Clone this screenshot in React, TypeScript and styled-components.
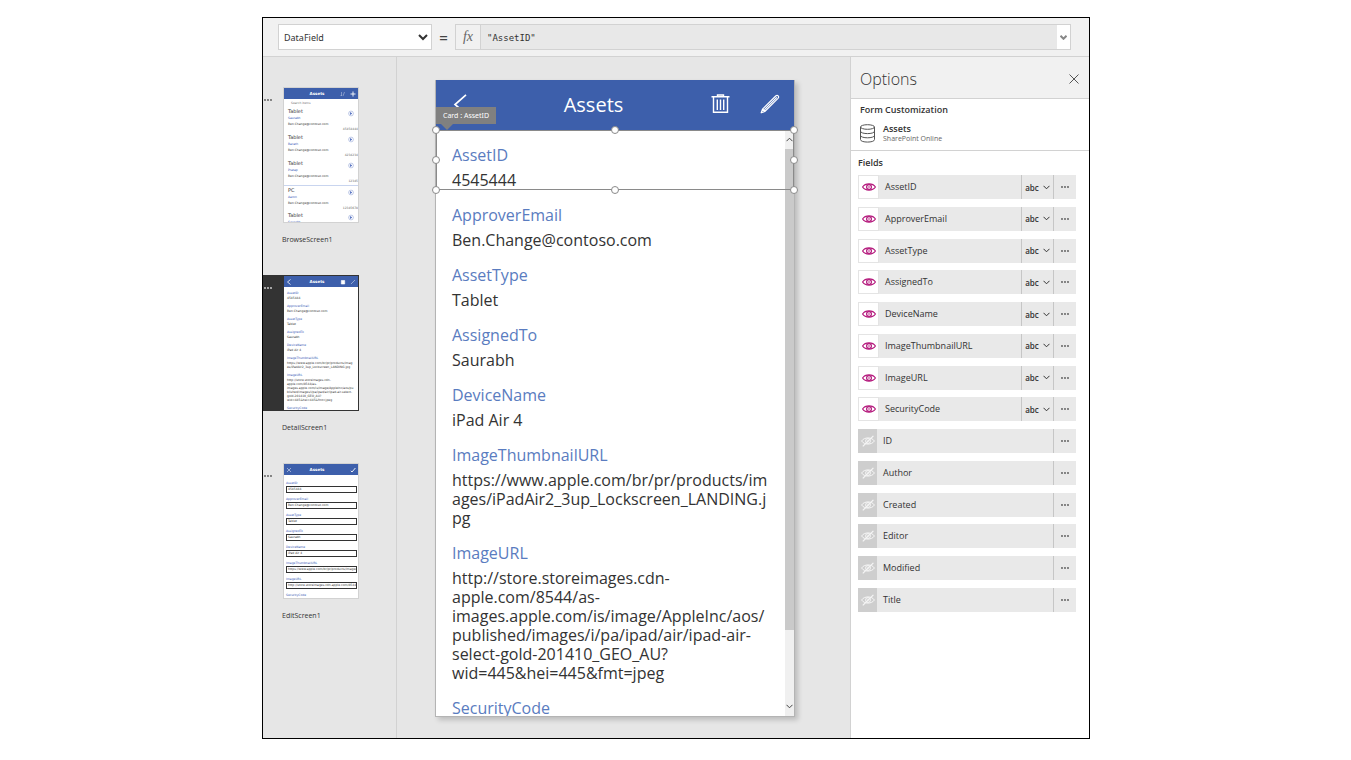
import React from "react";
import styled, { createGlobalStyle, css } from "styled-components";

const blue = "#3d5fab";
const line = "#d2d2d2";

const GlobalStyle = createGlobalStyle`
  * { box-sizing: border-box; }
  body {
    margin: 0;
    padding: 17px 0 21px 1px;
    background: #fff;
    font-family: "Open Sans", "Noto Sans", sans-serif;
    color: #333;
  }
  button, input, select { font: inherit; color: inherit; }
  button { padding: 0; border: 0; background: none; }
  h1, h2, h3, p, ul, dl, dt, dd { margin: 0; padding: 0; font-weight: 400; }
  ul { list-style: none; }
`;

const Frame = styled.div`
  max-width: 828px;
  margin: 0 auto;
  border: 1px solid #000;
  background: #e6e6e6;
`;

/* ---------- formula bar ---------- */

const FormulaBar = styled.header`
  display: flex;
  align-items: center;
  height: 39px;
  padding: 0 18px 0 15px;
  background: #f1f1f1;
  border-bottom: 1px solid ${line};
`;

const PropertySelect = styled.select`
  width: 154px;
  height: 26px;
  padding: 0 0 0 1px;
  border: 1px solid ${line};
  border-radius: 0;
  background: #fff;
  font-family: "Noto Sans", sans-serif;
  font-size: 9px;
`;

const Equals = styled.span`
  width: 23px;
  text-align: center;
  font-size: 15px;
  line-height: 20px;
  font-weight: 600;
  color: #444;
`;

const Formula = styled.div`
  display: flex;
  flex: 1;
  height: 26px;
  border: 1px solid ${line};
  background: #e8e8e8;
`;

const FxLabel = styled.label`
  width: 25px;
  border-right: 1px solid ${line};
  background: #f1f1f1;
  font-family: "Liberation Serif", serif;
  font-style: italic;
  font-size: 14px;
  line-height: 24px;
  text-align: center;
  color: #666;
`;

const FormulaInput = styled.input`
  flex: 1;
  min-width: 0;
  padding: 1px 6px 0;
  border: 0;
  background: transparent;
  font-family: "DejaVu Sans Mono", monospace;
  font-size: 9px;
`;

const ExpandButton = styled.button`
  display: grid;
  place-items: center;
  width: 13px;
  background: #fff;
  color: #888;
`;

/* ---------- screens list ---------- */

const Workspace = styled.div`
  display: flex;
`;

const Screens = styled.nav`
  flex: 0 0 134px;
  padding-top: 30px;
  border-right: 1px solid ${line};
`;

const ScreenItem = styled.div`
  margin-bottom: 27px;
`;

const ScreenButton = styled.button<{ $active?: boolean }>`
  display: grid;
  grid-template-columns: 20px 76px;
  height: 136px;
  text-align: left;
  color: #555;
  ${(p) =>
    p.$active &&
    css`
      background: #333;
      color: #ddd;
    `}
`;

const ScreenMore = styled.span`
  padding: 8px 0 0 1px;
  line-height: 0;
`;

const ScreenName = styled.p`
  padding-left: 19px;
  margin-top: 9px;
  font-size: 7px;
  line-height: 16px;
`;

const Thumb = styled.span<{ $active?: boolean }>`
  display: block;
  height: 136px;
  overflow: hidden;
  border: 1px solid ${(p) => (p.$active ? "#333" : line)};
  background: #fff;
  color: #333;
  font-family: "DejaVu Sans", sans-serif;
  font-size: 3px;
  line-height: 4px;
`;

const ThumbBar = styled.span`
  display: grid;
  grid-template-columns: 10px 1fr 10px 10px;
  align-items: center;
  justify-items: center;
  height: 11px;
  background: ${blue};
  color: #fff;
  font-size: 4px;
  font-weight: 700;
`;

const ThumbTitle = styled.span`
  padding-left: 2px;
`;

const ThumbSearch = styled.span`
  display: block;
  padding: 2px 0 0 7px;
  height: 8px;
  color: #777;
`;

const ThumbRow = styled.span<{ $split?: boolean }>`
  display: grid;
  grid-template-columns: 1fr 10px;
  height: 26px;
  padding: 2px 0 0 4px;
  ${(p) => p.$split && css`border-top: 1px solid #c9d5ef;`}
`;

const ThumbLines = styled.span`
  display: flex;
  flex-direction: column;
  gap: 2px;
`;

const ThumbHeading = styled.span`
  font-size: 5px;
  line-height: 5px;
`;

const ThumbBlue = styled.span`
  color: #3557b5;
`;

const ThumbDate = styled.span`
  grid-column: 1 / -1;
  justify-self: end;
  color: #666;
  line-height: 3px;
`;

const ThumbFields = styled.span<{ $edit?: boolean }>`
  display: block;
  padding: ${(p) => (p.$edit ? "2px 1px 0 2px" : "0 4px 0 3px")};
`;

const ThumbField = styled.span`
  display: flex;
  flex-direction: column;
  gap: 1px;
  padding-top: 4px;
`;

const ThumbBox = styled.span`
  height: 7px;
  padding-left: 1px;
  border: 1px solid #333;
  overflow: hidden;
  line-height: 5px;
  white-space: nowrap;
`;

const ThumbValue = styled.span`
  overflow-wrap: anywhere;
`;

/* ---------- canvas with the phone ---------- */

const Stage = styled.main`
  flex: 1;
  min-width: 0;
  padding: 23px 55px 21px 38px;
`;

const Phone = styled.section`
  border: 1px solid #b4b4b4;
  border-top: 0;
  background: #fff;
  box-shadow: 3px 3px 5px rgba(0, 0, 0, 0.18);
`;

const PhoneBar = styled.div`
  display: flex;
  align-items: center;
  height: 50px;
  padding: 0 14px 2px 13px;
  background: ${blue};
  color: #fff;
`;

const PhoneTitle = styled.h1`
  flex: 1;
  padding: 2px 0 0 7px;
  text-align: center;
  font-size: 20px;
  line-height: 28px;
`;

const PhoneAction = styled.button`
  display: grid;
  place-items: center;
  width: 21px;
  height: 24px;
`;

const PhoneActions = styled.div`
  display: flex;
  gap: 28px;
`;

const PhoneBody = styled.div`
  position: relative;
  display: flex;
  height: 586px;
`;

const Cards = styled.dl`
  flex: 1;
  min-width: 0;
  overflow: hidden;
`;

const Card = styled.div`
  padding: 14px 13px 0 16px;
`;

const CardLabel = styled.dt`
  margin-bottom: 5px;
  font-size: 16px;
  line-height: 22px;
  color: #5a7cc0;
`;

const CardValue = styled.dd`
  font-size: 16px;
  line-height: 19px;
  overflow-wrap: anywhere;
`;

const Scrollbar = styled.div`
  display: flex;
  flex-direction: column;
  align-items: center;
  width: 9px;
  background: #f0f0f0;
`;

const ScrollArrow = styled.button`
  display: grid;
  place-items: center;
  width: 9px;
  height: 19px;
  color: #444;
`;

const ScrollThumb = styled.div`
  width: 9px;
  height: 481px;
  margin-bottom: auto;
  background: #cacaca;
`;

const Selection = styled.div`
  position: absolute;
  inset: 0 0 auto 0;
  height: 60px;
  box-shadow: inset 0 0 0 1px #8a8a8a;
`;

const Handle = styled.i<{ $x: string; $y: string }>`
  position: absolute;
  left: ${(p) => p.$x};
  top: ${(p) => p.$y};
  width: 8px;
  height: 8px;
  margin: -4px;
  border: 1px solid #8a8a8a;
  border-radius: 50%;
  background: #fff;
`;

const CardTag = styled.span`
  position: absolute;
  left: 0;
  bottom: 66px;
  padding: 0 7px;
  background: #808080;
  color: #fff;
  font-family: "Noto Sans", sans-serif;
  font-size: 7px;
  line-height: 17px;
  white-space: nowrap;
  &::after {
    content: "";
    position: absolute;
    left: 5px;
    top: 100%;
    border: 6px solid transparent;
    border-top-color: #808080;
    border-bottom: 0;
  }
`;

/* ---------- options panel ---------- */

const Options = styled.aside`
  flex: 0 0 239px;
  border-left: 1px solid ${line};
  background: #fff;
`;

const OptionsHeader = styled.div`
  display: flex;
  align-items: center;
  justify-content: space-between;
  height: 42px;
  padding: 3px 9px 0 9px;
  border-bottom: 1px solid ${line};
  background: #f1f1f1;
`;

const OptionsTitle = styled.h2`
  font-size: 16px;
  font-weight: 300;
  line-height: 24px;
`;

const CloseButton = styled.button`
  display: grid;
  place-items: center;
  width: 12px;
  height: 12px;
`;

const Source = styled.div`
  height: 52px;
  padding: 4px 9px 0;
  border-bottom: 1px solid ${line};
`;

const SourceTitle = styled.h3`
  font-size: 9px;
  font-weight: 600;
  line-height: 14px;
`;

const SourceInfo = styled.div`
  display: flex;
  gap: 8px;
  margin-top: 7px;
  line-height: 10px;
`;

const SourceName = styled.p`
  font-size: 9px;
  font-weight: 600;
`;

const SourceKind = styled.p`
  font-size: 7px;
  color: #666;
`;

const FieldsTitle = styled.h3`
  padding: 5px 7px 5px;
  font-size: 9px;
  font-weight: 600;
  line-height: 14px;
`;

const FieldList = styled.ul`
  display: flex;
  flex-direction: column;
  justify-content: space-between;
  height: 437px;
  padding: 0 13px 0 7px;
`;

const FieldRow = styled.li`
  display: flex;
  height: 24px;
  background: #e9e9e9;
`;

const EyeButton = styled.button<{ $hidden: boolean }>`
  display: grid;
  place-items: center;
  width: ${(p) => (p.$hidden ? "19px" : "21px")};
  border: ${(p) => (p.$hidden ? "0" : "1px solid #e4e4e4")};
  background: ${(p) => (p.$hidden ? "#cecece" : "#fff")};
`;

const FieldName = styled.span`
  flex: 1;
  padding-left: 6px;
  font-size: 9px;
  line-height: 24px;
`;

const TypeButton = styled.button`
  display: flex;
  align-items: center;
  justify-content: center;
  gap: 4px;
  width: 32px;
  border-left: 1px solid #c6c6c6;
  font-size: 8px;
  font-weight: 600;
`;

const MoreButton = styled.button`
  display: grid;
  place-items: center;
  width: 23px;
  border-left: 1px solid #c6c6c6;
  color: #555;
`;

/* ---------- icons ---------- */

const Chevron = ({ up = false, width = 2 }: { up?: boolean; width?: number }) => (
  <svg width="7" height="5" viewBox="0 0 7 5" fill="none" stroke="currentColor" strokeWidth={width}>
    <path d={up ? "M.5 4.2 3.5 1.2 6.5 4.2" : "M.5.8 3.5 3.8 6.5.8"} />
  </svg>
);

const Dots = () => (
  <svg width="8" height="2" viewBox="0 0 8 2" fill="currentColor">
    <circle cx="1" cy="1" r=".9" />
    <circle cx="4" cy="1" r=".9" />
    <circle cx="7" cy="1" r=".9" />
  </svg>
);

const Eye = ({ off }: { off: boolean }) => {
  const c = off ? "#f6f6f6" : "#b4187c";
  return (
    <svg width="14" height="12" viewBox="0 0 14 12" fill="none" stroke={c} strokeWidth={off ? 1 : 1.2}>
      <path d="M.6 6C3.2 1.9 10.8 1.9 13.4 6 10.8 10.1 3.2 10.1.6 6Z" />
      <circle cx="7" cy="6" r="2.4" />
      <circle cx="7" cy="6" r=".8" fill={c} stroke="none" />
      {off && <path d="M12.4.8 1.8 11.4" strokeWidth="1.2" />}
    </svg>
  );
};

const Database = () => (
  <svg width="15" height="19" viewBox="0 0 15 19" fill="none" stroke="#555" strokeWidth="1">
    <ellipse cx="7.5" cy="3" rx="7" ry="2.3" />
    <path d="M.5 3V15.6C.5 18.9 14.5 18.9 14.5 15.6V3M.5 7.2C.5 10.4 14.5 10.4 14.5 7.2M.5 11.4C.5 14.6 14.5 14.6 14.5 11.4" />
  </svg>
);

const Trash = () => (
  <svg width="19" height="20" viewBox="0 0 19 20" fill="none" stroke="#fff" strokeWidth="1.4">
    <path d="M.5 2.7H18.5M6.5 2.5V1H12.5V2.5M2.5 3V18.3H16.5V3M6.3 5.5V16M9.5 5.5V16M12.7 5.5V16" />
  </svg>
);

const Pencil = () => (
  <svg width="20" height="20" viewBox="0 0 20 20" fill="none" stroke="#fff" strokeWidth="1.2" strokeLinejoin="round">
    <path d="M1.2 18.8 2.5 15.2 15.7 2C17.6.4 19.6 2.5 18 4.3L4.8 17.5ZM2.7 15 5 17.3M4.4 15.7 16.8 3.3" />
  </svg>
);

const Back = () => (
  <svg width="14" height="21" viewBox="0 0 14 21" fill="none" stroke="#fff" strokeWidth="1.7">
    <path d="M13 .8 2 10.5 13 20.2" />
  </svg>
);

/* ---------- data ---------- */

const thumbUrl = "https://www.apple.com/br/pr/products/images/iPadAir2_3up_Lockscreen_LANDING.jpg";
const imageUrl =
  "http://store.storeimages.cdn-apple.com/8544/as-images.apple.com/is/image/AppleInc/aos/published/images/i/pa/ipad/air/ipad-air-select-gold-201410_GEO_AU?wid=445&hei=445&fmt=jpeg";

const record: [string, string][] = [
  ["AssetID", "4545444"],
  ["ApproverEmail", "Ben.Change@contoso.com"],
  ["AssetType", "Tablet"],
  ["AssignedTo", "Saurabh"],
  ["DeviceName", "iPad Air 4"],
  ["ImageThumbnailURL", thumbUrl],
  ["ImageURL", imageUrl],
  ["SecurityCode", ""],
];

const hiddenFields = ["ID", "Author", "Created", "Editor", "Modified", "Title"];

const assets: [string, string, string][] = [
  ["Tablet", "Saurabh", "45454444"],
  ["Tablet", "Barath", "4234234"],
  ["Tablet", "Pratap", "12345"],
  ["PC", "Aaron", "12345678"],
  ["Tablet", "Saurabh", ""],
];

const handles: [string, string][] = [
  ["0%", "0%"], ["50%", "0%"], ["100%", "0%"],
  ["0%", "50%"], ["100%", "50%"],
  ["0%", "100%"], ["50%", "100%"], ["100%", "100%"],
];

/* ---------- screen thumbnails ---------- */

const ThumbHeader = ({ kind }: { kind: "browse" | "detail" | "edit" }) => (
  <ThumbBar>
    <svg width="6" height="6" viewBox="0 0 6 6" fill="none" stroke="#fff" strokeWidth=".8">
      {kind === "detail" && <path d="M4.5.5 1.5 3 4.5 5.5" />}
      {kind === "edit" && <path d="M1 1 5 5M5 1 1 5" opacity=".6" />}
    </svg>
    <ThumbTitle>Assets</ThumbTitle>
    <svg width="6" height="6" viewBox="0 0 6 6" fill="none" stroke="#fff" strokeWidth=".6">
      {kind === "browse" && <path d="M1.5 1V5M3 5 4.5 1M.5 4 1.5 5" opacity=".6" />}
      {kind === "detail" && <path d="M1.3 1.5H4.7V5H1.3Z" fill="#fff" />}
    </svg>
    <svg width="6" height="6" viewBox="0 0 6 6" fill="none" stroke="#fff" strokeWidth=".9">
      {kind === "browse" && <path d="M3 .5V5.5M.5 3H5.5" />}
      {kind === "detail" && <path d="M1 5 5 1" opacity=".5" />}
      {kind === "edit" && <path d="M.8 3.8 2 5 5.4 1" />}
    </svg>
  </ThumbBar>
);

const BrowseThumb = () => (
  <Thumb>
    <ThumbHeader kind="browse" />
    <ThumbSearch>Search items</ThumbSearch>
    {assets.map(([type, owner, code], i) => (
      <ThumbRow key={i} $split={i === 3}>
        <ThumbLines>
          <ThumbHeading>{type}</ThumbHeading>
          <ThumbBlue>{owner}</ThumbBlue>
          {code && <span>Ben.Change@contoso.com</span>}
        </ThumbLines>
        <svg width="6" height="10" viewBox="0 0 6 10" fill="none" stroke="#3557b5" strokeWidth=".5">
          <circle cx="3" cy="4.5" r="2.4" opacity=".6" />
          <path d="M2.4 3.4 3.8 4.5 2.4 5.6Z" fill="#3557b5" />
        </svg>
        <ThumbDate>{code}</ThumbDate>
      </ThumbRow>
    ))}
  </Thumb>
);

const DetailThumb = () => (
  <Thumb $active>
    <ThumbHeader kind="detail" />
    <ThumbFields>
      {record.map(([name, value]) => (
        <ThumbField key={name}>
          <ThumbBlue>{name}</ThumbBlue>
          <ThumbValue>{value}</ThumbValue>
        </ThumbField>
      ))}
    </ThumbFields>
  </Thumb>
);

const EditThumb = () => (
  <Thumb>
    <ThumbHeader kind="edit" />
    <ThumbFields $edit>
      {record.map(([name, value]) => (
        <ThumbField key={name}>
          <ThumbBlue>{name}</ThumbBlue>
          <ThumbBox>{value}</ThumbBox>
        </ThumbField>
      ))}
    </ThumbFields>
  </Thumb>
);

const screens = [
  { name: "BrowseScreen1", view: <BrowseThumb />, active: false },
  { name: "DetailScreen1", view: <DetailThumb />, active: true },
  { name: "EditScreen1", view: <EditThumb />, active: false },
];

const Field = ({ name, hidden }: { name: string; hidden: boolean }) => (
  <FieldRow>
    <EyeButton $hidden={hidden} aria-label={hidden ? `Show ${name}` : `Hide ${name}`}>
      <Eye off={hidden} />
    </EyeButton>
    <FieldName>{name}</FieldName>
    {!hidden && (
      <TypeButton>
        abc
        <Chevron width={1} />
      </TypeButton>
    )}
    <MoreButton aria-label={`More for ${name}`}>
      <Dots />
    </MoreButton>
  </FieldRow>
);

export default function App() {
  return (
    <>
      <GlobalStyle />
      <Frame>
        <FormulaBar>
          <PropertySelect aria-label="Property" defaultValue="DataField">
            <option>DataField</option>
          </PropertySelect>
          <Equals>=</Equals>
          <Formula>
            <FxLabel htmlFor="formula">fx</FxLabel>
            <FormulaInput id="formula" defaultValue={'"AssetID"'} />
            <ExpandButton aria-label="Expand formula bar">
              <Chevron />
            </ExpandButton>
          </Formula>
        </FormulaBar>
        <Workspace>
          <Screens aria-label="Screens">
            {screens.map((s) => (
              <ScreenItem key={s.name}>
                <ScreenButton $active={s.active} aria-label={s.name}>
                  <ScreenMore>
                    <Dots />
                  </ScreenMore>
                  {s.view}
                </ScreenButton>
                <ScreenName>{s.name}</ScreenName>
              </ScreenItem>
            ))}
          </Screens>
          <Stage>
            <Phone>
              <PhoneBar>
                <PhoneAction aria-label="Back">
                  <Back />
                </PhoneAction>
                <PhoneTitle>Assets</PhoneTitle>
                <PhoneActions>
                  <PhoneAction aria-label="Delete">
                    <Trash />
                  </PhoneAction>
                  <PhoneAction aria-label="Edit">
                    <Pencil />
                  </PhoneAction>
                </PhoneActions>
              </PhoneBar>
              <PhoneBody>
                <Cards>
                  {record.map(([name, value]) => (
                    <Card key={name}>
                      <CardLabel>{name}</CardLabel>
                      <CardValue>{value}</CardValue>
                    </Card>
                  ))}
                </Cards>
                <Scrollbar>
                  <ScrollArrow aria-label="Scroll up">
                    <Chevron up width={1} />
                  </ScrollArrow>
                  <ScrollThumb />
                  <ScrollArrow aria-label="Scroll down">
                    <Chevron width={1} />
                  </ScrollArrow>
                </Scrollbar>
                <Selection>
                  <CardTag>Card : AssetID</CardTag>
                  {handles.map(([x, y]) => (
                    <Handle key={x + y} $x={x} $y={y} />
                  ))}
                </Selection>
              </PhoneBody>
            </Phone>
          </Stage>
          <Options>
            <OptionsHeader>
              <OptionsTitle>Options</OptionsTitle>
              <CloseButton aria-label="Close">
                <svg width="10" height="10" viewBox="0 0 10 10" stroke="#555" strokeWidth="1">
                  <path d="M.5.5 9.5 9.5M9.5.5.5 9.5" />
                </svg>
              </CloseButton>
            </OptionsHeader>
            <Source>
              <SourceTitle>Form Customization</SourceTitle>
              <SourceInfo>
                <Database />
                <div>
                  <SourceName>Assets</SourceName>
                  <SourceKind>SharePoint Online</SourceKind>
                </div>
              </SourceInfo>
            </Source>
            <FieldsTitle>Fields</FieldsTitle>
            <FieldList>
              {record.map(([name]) => (
                <Field key={name} name={name} hidden={false} />
              ))}
              {hiddenFields.map((name) => (
                <Field key={name} name={name} hidden />
              ))}
            </FieldList>
          </Options>
        </Workspace>
      </Frame>
    </>
  );
}
